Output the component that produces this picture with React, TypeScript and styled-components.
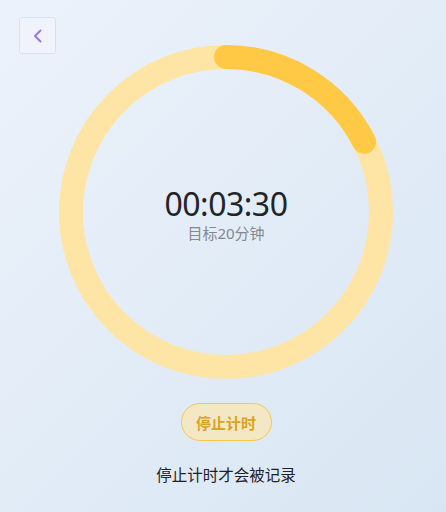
import React from 'react';
import styled, { createGlobalStyle } from 'styled-components';

const GlobalStyle = createGlobalStyle`
  html, body {
    margin: 0;
    padding: 0;
  }
  body {
    font-family: "Noto Sans", "Noto Sans CJK SC", sans-serif;
  }
`;

const Page = styled.div`
  width: 446px;
  height: 512px;
  box-sizing: border-box;
  padding: 17px 13px 0 19px;
  background: linear-gradient(135deg, #ecf2fb 0%, #e2ecf7 50%, #d8e6f3 100%);
  display: flex;
  flex-direction: column;
  overflow: hidden;
`;

const Header = styled.div`
  display: flex;
  height: 37px;
`;

const BackButton = styled.button`
  width: 37px;
  height: 37px;
  padding: 0;
  box-sizing: border-box;
  border: 1.5px solid #d6e2f0;
  background: #f1f3fc;
  border-radius: 3px;
  display: flex;
  align-items: center;
  justify-content: center;
  color: #9a78e6;
  cursor: pointer;
`;

const RingWrap = styled.div`
  position: relative;
  width: 334px;
  height: 334px;
  margin: -9px auto 0;
  align-self: center;
`;

const RingSvg = styled.svg`
  display: block;
`;

const Center = styled.div`
  position: absolute;
  inset: 0;
  display: flex;
  flex-direction: column;
  align-items: center;
  justify-content: center;
  padding-top: 4px;
`;

const Time = styled.div`
  font-family: "Noto Sans", sans-serif;
  font-size: 32px;
  line-height: 38px;
  color: #222428;
  letter-spacing: -0.5px;
`;

const Goal = styled.div`
  font-size: 15px;
  line-height: 20px;
  color: #85898f;
  margin-top: 0;
`;

const StopButton = styled.button`
  align-self: center;
  margin-top: 24px;
  width: 91px;
  height: 38px;
  box-sizing: border-box;
  border: 1.5px solid #f5c94c;
  border-radius: 19px;
  background: #f3e7c4;
  color: #dba322;
  font-family: "Noto Sans CJK SC", sans-serif;
  font-size: 15px;
  font-weight: 700;
  cursor: pointer;
  padding: 0;
`;

const Note = styled.div`
  align-self: center;
  margin-top: 22px;
  font-family: "Noto Sans CJK SC", sans-serif;
  font-size: 15.5px;
  color: #1f2226;
`;

const SIZE = 334;
const STROKE = 24;
const R = (SIZE - STROKE) / 2;
const C = 2 * Math.PI * R;

const Ring: React.FC<{ progress: number }> = ({ progress }) => (
  <RingSvg width={SIZE} height={SIZE} viewBox={`0 0 ${SIZE} ${SIZE}`}>
    <circle cx={SIZE / 2} cy={SIZE / 2} r={R} fill="none" stroke="#ffe5a5" strokeWidth={STROKE} />
    <circle
      cx={SIZE / 2}
      cy={SIZE / 2}
      r={R}
      fill="none"
      stroke="#ffc845"
      strokeWidth={STROKE}
      strokeLinecap="round"
      strokeDasharray={`${C * progress} ${C}`}
      transform={`rotate(-90 ${SIZE / 2} ${SIZE / 2})`}
    />
  </RingSvg>
);

export default function App() {
  const elapsed = 210;
  const goal = 20 * 60;
  return (
    <>
      <GlobalStyle />
      <Page>
        <Header>
          <BackButton aria-label="返回">
            <svg width="16" height="16" viewBox="0 0 16 16" fill="none">
              <path d="M10.5 2.5 L5 8 L10.5 13.5" stroke="currentColor" strokeWidth="2" strokeLinecap="round" strokeLinejoin="round" />
            </svg>
          </BackButton>
        </Header>
        <RingWrap>
          <Ring progress={elapsed / goal} />
          <Center>
            <Time>00:03:30</Time>
            <Goal>目标20分钟</Goal>
          </Center>
        </RingWrap>
        <StopButton>停止计时</StopButton>
        <Note>停止计时才会被记录</Note>
      </Page>
    </>
  );
}
